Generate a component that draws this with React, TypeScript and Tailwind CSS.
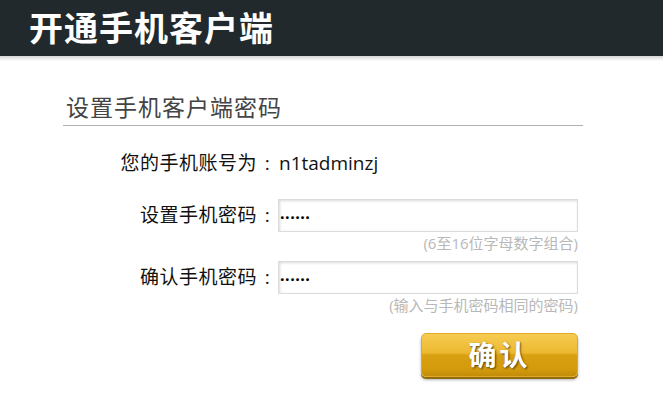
const font = { fontFamily: '"Open Sans", "Noto Sans CJK SC", sans-serif' };

const Label = ({ text }: { text: string }) => (
  <div className="w-[215px] flex justify-end items-center text-[19px] tracking-[0.5px] text-[#111]">
    <span>{text}</span>
    <span className="w-[21px] text-center">:</span>
  </div>
);

const Field = ({ label, hint }: { label: string; hint: string }) => (
  <div className="flex flex-col">
    <div className="flex items-center h-[33px]">
      <Label text={label} />
      <div className="w-[300px] h-[33px] border border-[#dcdcdc] shadow-[inset_1px_1px_3px_rgba(0,0,0,0.15)] bg-white flex items-center pl-[1px]">
        <span className="text-[16px] font-bold text-black leading-none tracking-[0.5px] -translate-y-[3px]">......</span>
      </div>
    </div>
    <div className="w-[515px] text-right text-[15px] text-[#b8b8b8] leading-[22px]">{hint}</div>
  </div>
);

export default function App() {
  return (
    <div className="w-[663px] h-[416px] bg-white overflow-hidden" style={font}>
      <div className="h-[56px] bg-[#22292c] flex items-center pl-[29px]">
        <h1 className="text-[34px] font-bold text-white tracking-[1px] leading-none">开通手机客户端</h1>
      </div>
      <div className="h-[5px] bg-gradient-to-b from-[#d4d4d4] to-white" />
      <div className="pl-[63px] pt-[32px]">
        <div className="w-[520px] border-b border-[#b0b0b0] pl-[3px] pb-[3px]">
          <div className="text-[23px] tracking-[1px] text-[#444] leading-[29px]">设置手机客户端密码</div>
        </div>
        <div className="flex items-center h-[34px] mt-[20px]">
          <Label text="您的手机账号为" />
          <div className="text-[19px] text-[#111] pl-[1px]">n1tadminzj</div>
        </div>
        <div className="mt-[19px] flex flex-col gap-[7px]">
          <Field label="设置手机密码" hint="(6至16位字母数字组合)" />
          <Field label="确认手机密码" hint="(输入与手机密码相同的密码)" />
        </div>
        <div className="w-[515px] flex justify-end mt-[17px]">
          <button className="w-[157px] h-[44px] rounded-[5px] bg-[linear-gradient(to_bottom,#f6cc52_0%,#ecb830_45%,#d9a011_50%,#d39a0c_85%,#c28c0a_100%)] shadow-[0_2px_0_#8f6c12,0_3px_3px_rgba(0,0,0,0.3)] border border-[#e0aa24] text-white text-[28px] font-bold tracking-[3px] [text-shadow:1px_1px_2px_rgba(0,0,0,0.6)] leading-none">
            确认
          </button>
        </div>
      </div>
    </div>
  );
}
